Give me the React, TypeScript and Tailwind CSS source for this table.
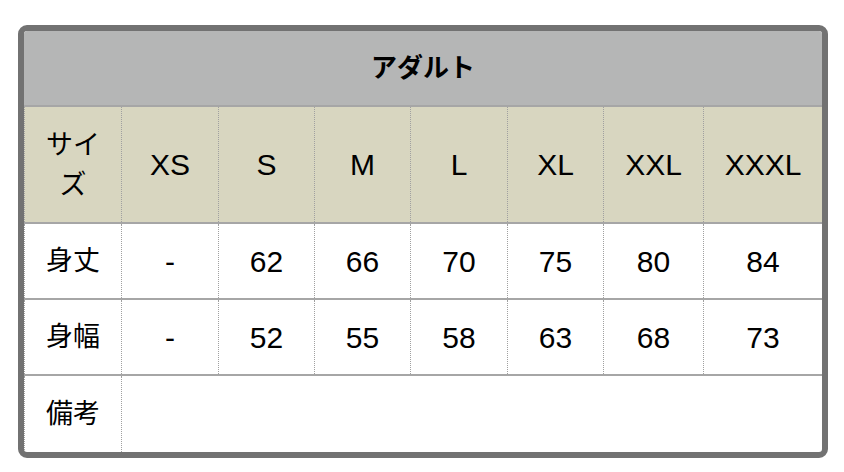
const sizes = ['XS', 'S', 'M', 'L', 'XL', 'XXL', 'XXXL'];

const rows = [
  { label: '身丈', values: ['-', '62', '66', '70', '75', '80', '84'] },
  { label: '身幅', values: ['-', '52', '55', '58', '63', '68', '73'] },
];

const grid = 'grid grid-cols-[97px_97px_96px_96px_97px_96px_100px_119px]';
const cell = 'flex items-center justify-center text-center border-l border-dotted border-[#a0a0a0]';

export default function App() {
  return (
    <div
      className="min-h-screen bg-white pl-[18px] pt-[25px] text-black"
      style={{ fontFamily: '"Liberation Sans", "Noto Sans CJK JP", sans-serif' }}
    >
      <div className="w-[810px] overflow-hidden rounded-[9px] border-[6px] border-[#727272] text-[30px]">
        {/* title */}
        <div className="flex h-[76px] items-center justify-center border-b-2 border-[#a6a6a6] bg-[#b5b6b6] text-[26px] font-bold">
          アダルト
        </div>

        {/* size header */}
        <div className={`${grid} h-[117px] border-b-2 border-[#a6a6a6] bg-[#d8d6c0]`}>
          <div className={`${cell} px-[16px] text-[27px] leading-[40px]`}>サイズ</div>
          {sizes.map((s) => (
            <div key={s} className={cell}>
              {s}
            </div>
          ))}
        </div>

        {rows.map((row) => (
          <div key={row.label} className={`${grid} h-[76px] border-b-2 border-[#a6a6a6]`}>
            <div className={`${cell} text-[27px]`}>{row.label}</div>
            {row.values.map((v, i) => (
              <div key={i} className={cell}>
                {v}
              </div>
            ))}
          </div>
        ))}

        {/* remarks */}
        <div className={`${grid} h-[76px]`}>
          <div className={`${cell} text-[27px]`}>備考</div>
          <div className={`${cell} col-span-7`}></div>
        </div>
      </div>
    </div>
  );
}
